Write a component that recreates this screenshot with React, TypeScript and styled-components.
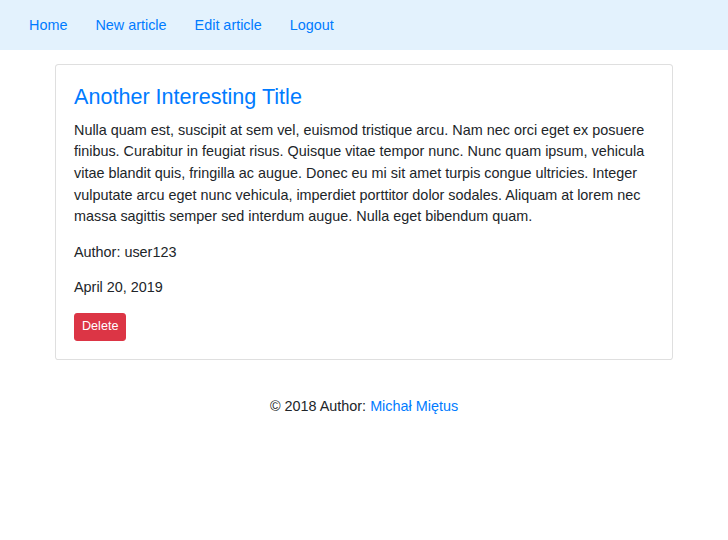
import React from "react";
import styled, { createGlobalStyle } from "styled-components";

const Global = createGlobalStyle`
  html { font-size: 14.4px; }
  body {
    margin: 0;
    font-family: "Liberation Sans", Arial, sans-serif;
    font-size: 1rem;
    line-height: 1.5;
    color: #212529;
    background: #fff;
  }
  * { box-sizing: border-box; }
`;

const Navbar = styled.nav`
  display: flex;
  align-items: center;
  height: 50px;
  background: #e3f2fd;
  padding: 2px 15px 0;
`;

const NavLink = styled.a`
  display: block;
  padding: 0.5rem 14px;
  color: #007bff;
  text-decoration: none;
  cursor: pointer;
`;

const Main = styled.main`
  width: 618px;
  margin: 14px auto 0;
`;

const Card = styled.article`
  border: 1px solid rgba(0, 0, 0, 0.125);
  border-radius: 0.25rem;
  background: #fff;
`;

const CardBody = styled.div`
  padding: 18px;
`;

const Title = styled.h4`
  margin: 1px 0 9.8px;
  font-size: 1.5rem;
  font-weight: 400;
  line-height: 1.2;
  color: #007bff;
`;

const Text = styled.p`
  margin: 0 0 13.9px;
`;

const DangerButton = styled.button`
  display: block;
  height: 28px;
  font-family: inherit;
  font-size: 0.875rem;
  line-height: 1.5;
  padding: 0 7px;
  border: 1px solid #dc3545;
  border-radius: 0.2rem;
  background: #dc3545;
  color: #fff;
  cursor: pointer;
`;

const Footer = styled.footer`
  text-align: center;
  margin-top: 36px;
`;

const Link = styled.a`
  color: #007bff;
  text-decoration: none;
`;

export default function App() {
  return (
    <>
      <Global />
      <Navbar>
        <NavLink>Home</NavLink>
        <NavLink>New article</NavLink>
        <NavLink>Edit article</NavLink>
        <NavLink>Logout</NavLink>
      </Navbar>
      <Main>
        <Card>
          <CardBody>
            <Title>Another Interesting Title</Title>
            <Text>
              Nulla quam est, suscipit at sem vel, euismod tristique arcu. Nam nec orci eget ex posuere
              finibus. Curabitur in feugiat risus. Quisque vitae tempor nunc. Nunc quam ipsum, vehicula
              vitae blandit quis, fringilla ac augue. Donec eu mi sit amet turpis congue ultricies. Integer
              vulputate arcu eget nunc vehicula, imperdiet porttitor dolor sodales. Aliquam at lorem nec
              massa sagittis semper sed interdum augue. Nulla eget bibendum quam.
            </Text>
            <Text>Author: user123</Text>
            <Text>April 20, 2019</Text>
            <DangerButton>Delete</DangerButton>
          </CardBody>
        </Card>
      </Main>
      <Footer>
        © 2018 Author: <Link>Michał Miętus</Link>
      </Footer>
    </>
  );
}
